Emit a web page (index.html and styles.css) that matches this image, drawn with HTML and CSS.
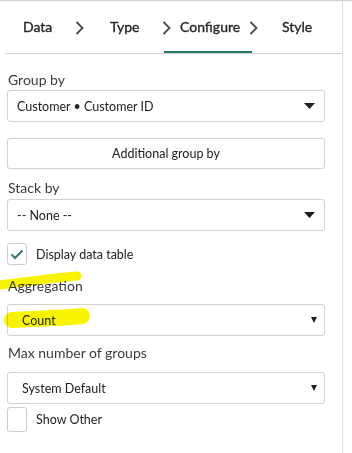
FILE: index.html
```html
<!DOCTYPE html>
<html>
<head>
<meta charset="utf-8">
<link rel="stylesheet" href="styles.css">
</head>
<body>
<div class="frame">
<div class="panel">
  <nav class="tabs">
    <span class="tab tab-data">Data</span>
    <svg class="chev" width="10" height="14" viewBox="0 0 10 14"><path d="M1.5 1 L7.5 7 L1.5 13" fill="none" stroke="#4a4a4a" stroke-width="1.8"/></svg>
    <span class="tab tab-type">Type</span>
    <svg class="chev" width="10" height="14" viewBox="0 0 10 14"><path d="M1.5 1 L7.5 7 L1.5 13" fill="none" stroke="#4a4a4a" stroke-width="1.8"/></svg>
    <span class="tab tab-active">Configure</span>
    <svg class="chev" width="10" height="14" viewBox="0 0 10 14"><path d="M1.5 1 L7.5 7 L1.5 13" fill="none" stroke="#4a4a4a" stroke-width="1.8"/></svg>
    <span class="tab tab-style">Style</span>
  </nav>

  <div class="form">
    <div class="label label-group">Group by</div>
    <div class="select">
      <span>Customer • Customer ID</span>
      <svg width="11" height="6" viewBox="0 0 11 6"><path d="M0 0 H11 L5.5 6 Z" fill="#1e1e1e"/></svg>
    </div>

    <div class="button">Additional group by</div>

    <div class="label label-stack">Stack by</div>
    <div class="select">
      <span>-- None --</span>
      <svg width="11" height="6" viewBox="0 0 11 6"><path d="M0 0 H11 L5.5 6 Z" fill="#1e1e1e"/></svg>
    </div>

    <label class="check check-table">
      <span class="box"><svg width="14" height="11" viewBox="0 0 14 11"><path d="M1.5 5.5 L5 9 L12.5 1.5" fill="none" stroke="#2f7b6b" stroke-width="2"/></svg></span>
      <span>Display data table</span>
    </label>

    <div class="agg">
      <div class="label label-agg">Aggregation</div>
      <div class="select select-small">
        <span>Count</span>
        <svg width="6" height="6" viewBox="0 0 6 6"><path d="M0 0 H6 L3 6 Z" fill="#1e1e1e"/></svg>
      </div>
      <svg class="hl" width="100" height="70" viewBox="0 0 100 70"><path d="M0 20 C25 17 50 13 77 11" fill="none" stroke="#f8f400" stroke-width="9" stroke-linecap="round"/><path d="M12 55 C35 54 60 53 82 51" fill="none" stroke="#f8f400" stroke-width="16" stroke-linecap="round"/></svg>
    </div>

    <div class="label label-max">Max number of groups</div>
    <div class="select select-small">
      <span>System Default</span>
      <svg width="6" height="6" viewBox="0 0 6 6"><path d="M0 0 H6 L3 6 Z" fill="#1e1e1e"/></svg>
    </div>

    <label class="check check-other">
      <span class="box"></span>
      <span>Show Other</span>
    </label>
  </div>
</div>
</div>
</body>
</html>
```

FILE: styles.css
```css
html, body {
  margin: 0;
  padding: 0;
  background: #fff;
}
body {
  font-family: Lato, "Open Sans", sans-serif;
  color: #222;
}
.frame {
  border-top: 1px solid #d0d0d0;
  height: 452px;
}
.panel {
  width: 343px;
  height: 452px;
  border-right: 1px solid #dadada;
  box-sizing: border-box;
  overflow: hidden;
}
.tabs {
  display: flex;
  align-items: center;
  height: 52px;
  margin-left: 5px;
  border-bottom: 1px solid #d4d4d4;
  font-size: 14px;
  color: #262626;
  -webkit-text-stroke: 0.35px #262626;
}
.tab {
  position: relative;
  line-height: 52px;
  white-space: nowrap;
}
.chev {
  flex: none;
  margin-top: 1px;
}
.tab-data { margin-left: 18px; width: 52px; }
.tab-type { margin-left: 25px; width: 52px; }
.tab-active { margin-left: 8px; width: 69px; }
.tab-style { margin-left: 23px; }
.tab-active::after {
  content: "";
  position: absolute;
  left: -16px;
  right: -3px;
  bottom: 0;
  height: 2.5px;
  background: #257a62;
}
.form {
  padding: 17px 17px 0 7px;
  display: flex;
  flex-direction: column;
}
.label {
  font-size: 14px;
  line-height: 18px;
  color: #3a3a3a;
  margin-left: 1px;
}
.label-group { margin-bottom: 1px; }
.label-stack { margin-top: 10px; margin-bottom: 2px; }
.label-agg { margin-bottom: 9px; }
.label-max { margin-top: 8px; margin-bottom: 10px; }
.select {
  height: 32px;
  border: 1px solid #d2d2d2;
  border-radius: 3px;
  box-sizing: border-box;
  display: flex;
  align-items: center;
  justify-content: space-between;
  padding: 0 9px 0 9px;
  font-size: 12.5px;
  color: #222;
}
.select svg { flex: none; }
.select-small { padding: 0 7px 0 14px; }
.button {
  margin-top: 16px;
  height: 31px;
  border: 1px solid #d2d2d2;
  border-radius: 3px;
  box-sizing: border-box;
  display: flex;
  align-items: center;
  justify-content: center;
  font-size: 12.5px;
  color: #222;
}
.check {
  display: flex;
  align-items: center;
  gap: 9px;
  font-size: 12.5px;
  color: #222;
}
.box {
  flex: none;
  width: 20px;
  height: 22px;
  border: 1px solid #cdcdcd;
  border-radius: 3px;
  box-sizing: border-box;
  display: flex;
  align-items: center;
  justify-content: center;
}
.check-table { margin-top: 12px; height: 22px; }
.agg {
  position: relative;
  margin-top: 12px;
}
.hl {
  position: absolute;
  left: -7px;
  top: -12px;
  pointer-events: none;
  mix-blend-mode: multiply;
}
.check-other { margin-top: 3px; height: 25px; }
.check-other .box { height: 25px; }
```
